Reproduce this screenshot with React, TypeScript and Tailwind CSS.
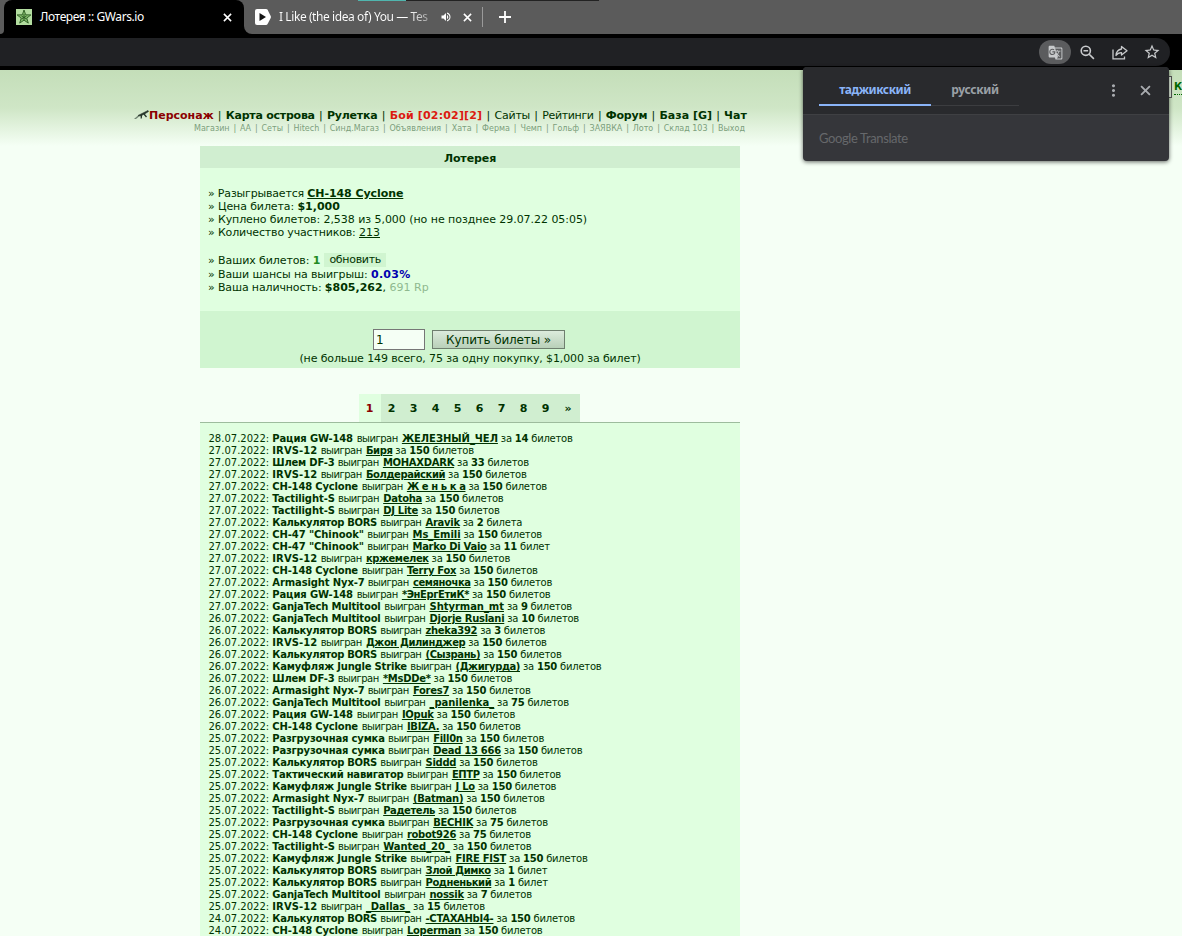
import React from "react";
import { MdGTranslate, MdMoreVert, MdVolumeUp, MdStarBorder } from "react-icons/md";

type Draw = [date: string, prize: string, winner: string, count: string, unit: string];

const draws: Draw[] = [
  ["28.07.2022", "Рация GW-148", "ЖЕЛЕЗНЫЙ_ЧЕЛ", "14", "билетов"],
  ["27.07.2022", "IRVS-12", "Биря", "150", "билетов"],
  ["27.07.2022", "Шлем DF-3", "MOHAXDARK", "33", "билетов"],
  ["27.07.2022", "IRVS-12", "Болдерайский", "150", "билетов"],
  ["27.07.2022", "CH-148 Cyclone", "Ж е н ь к а", "150", "билетов"],
  ["27.07.2022", "Tactilight-S", "Datoha", "150", "билетов"],
  ["27.07.2022", "Tactilight-S", "DJ Lite", "150", "билетов"],
  ["27.07.2022", "Калькулятор BORS", "Aravik", "2", "билета"],
  ["27.07.2022", 'CH-47 "Chinook"', "Ms_Emili", "150", "билетов"],
  ["27.07.2022", 'CH-47 "Chinook"', "Marko Di Vaio", "11", "билет"],
  ["27.07.2022", "IRVS-12", "кржемелек", "150", "билетов"],
  ["27.07.2022", "CH-148 Cyclone", "Terry Fox", "150", "билетов"],
  ["27.07.2022", "Armasight Nyx-7", "семяночка", "150", "билетов"],
  ["27.07.2022", "Рация GW-148", "*ЭнЕргЕтиК*", "150", "билетов"],
  ["27.07.2022", "GanjaTech Multitool", "Shtyrman_mt", "9", "билетов"],
  ["26.07.2022", "GanjaTech Multitool", "Djorje Ruslani", "10", "билетов"],
  ["26.07.2022", "Калькулятор BORS", "zheka392", "3", "билетов"],
  ["26.07.2022", "IRVS-12", "Джон Дилинджер", "150", "билетов"],
  ["26.07.2022", "Калькулятор BORS", "(Сызрань)", "150", "билетов"],
  ["26.07.2022", "Камуфляж Jungle Strike", "(Джигурда)", "150", "билетов"],
  ["26.07.2022", "Шлем DF-3", "*MsDDe*", "150", "билетов"],
  ["26.07.2022", "Armasight Nyx-7", "Fores7", "150", "билетов"],
  ["26.07.2022", "GanjaTech Multitool", "_panilenka_", "75", "билетов"],
  ["26.07.2022", "Рация GW-148", "IOpuk", "150", "билетов"],
  ["26.07.2022", "CH-148 Cyclone", "IBIZA.", "150", "билетов"],
  ["25.07.2022", "Разгрузочная сумка", "Fill0n", "150", "билетов"],
  ["25.07.2022", "Разгрузочная сумка", "Dead 13 666", "150", "билетов"],
  ["25.07.2022", "Калькулятор BORS", "Siddd", "150", "билетов"],
  ["25.07.2022", "Тактический навигатор", "ЕПТР", "150", "билетов"],
  ["25.07.2022", "Камуфляж Jungle Strike", "J Lo", "150", "билетов"],
  ["25.07.2022", "Armasight Nyx-7", "(Batman)", "150", "билетов"],
  ["25.07.2022", "Tactilight-S", "Радетель", "150", "билетов"],
  ["25.07.2022", "Разгрузочная сумка", "BECHIK", "75", "билетов"],
  ["25.07.2022", "CH-148 Cyclone", "robot926", "75", "билетов"],
  ["25.07.2022", "Tactilight-S", "Wanted_20_", "150", "билетов"],
  ["25.07.2022", "Камуфляж Jungle Strike", "FIRE FIST", "150", "билетов"],
  ["25.07.2022", "Калькулятор BORS", "Злой Димко", "1", "билет"],
  ["25.07.2022", "Калькулятор BORS", "Родненький", "1", "билет"],
  ["25.07.2022", "GanjaTech Multitool", "nossik", "7", "билетов"],
  ["25.07.2022", "IRVS-12", "_Dallas_", "15", "билетов"],
  ["24.07.2022", "Калькулятор BORS", "-CTAXAHbI4-", "150", "билетов"],
  ["24.07.2022", "CH-148 Cyclone", "Loperman", "150", "билетов"],
];

const prizeStyle: Record<string, string> = {
  "Рация GW-148": "w-[84.400px] tracking-[-0.130px]",
  "IRVS-12": "w-[48.400px] tracking-[0.080px]",
  "Шлем DF-3": "w-[65.400px] tracking-[-0.220px]",
  "CH-148 Cyclone": "w-[89.400px] tracking-[-0.180px]",
  "Tactilight-S": "w-[65.700px] tracking-[-0.100px]",
  "Калькулятор BORS": "w-[108px] tracking-[-0.330px]",
  'CH-47 "Chinook"': "w-[95px] tracking-[-0.100px]",
  "Armasight Nyx-7": "w-[95.400px] tracking-[-0.120px]",
  "GanjaTech Multitool": "w-[112px] tracking-[-0.180px]",
  "Камуфляж Jungle Strike": "w-[138px] tracking-[-0.200px]",
  "Разгрузочная сумка": "w-[115.700px] tracking-[-0.200px]",
  "Тактический навигатор": "w-[134.400px] tracking-[-0.220px]",
};

// cyrillic names run wider than latin ones
const nameTracking = (name: string) => {
  if (name.includes("_")) return "tracking-[-0.050px]";
  return /[а-яА-Я]/.test(name) ? "tracking-[-0.420px]" : "tracking-[-0.280px]";
};

const mainLinks = [
  { text: "Персонаж", style: "font-bold text-[#8b0000]" },
  { text: "Карта острова", style: "font-bold tracking-[-0.240px]" },
  { text: "Рулетка", style: "font-bold tracking-[-0.200px]" },
  { text: "Бой [02:02][2]", style: "font-bold text-[#dc1a10] tracking-[0.170px]" },
  { text: "Сайты", style: "tracking-[-0.200px]" },
  { text: "Рейтинги", style: "tracking-[-0.350px]" },
  { text: "Форум", style: "font-bold tracking-[-0.200px]" },
  { text: "База [G]", style: "font-bold" },
  { text: "Чат", style: "font-bold" },
];

const subLinks = ["Магазин", "АА", "Сеты", "Hitech", "Синд.Магаз", "Объявления", "Хата", "Ферма", "Чемп", "Гольф", "ЗАЯВКА", "Лото", "Склад 103", "Выход"];

const StarIcon = () => (
  <svg className="h-4 w-4 shrink-0" viewBox="0 0 16 16">
    <rect width="16" height="16" fill="#b3dda0" />
    <path d="M8 1l1.700 4.800 5.200.1-4.100 3.200 1.500 5L8 11.200l-4.300 2.900 1.500-5L1.100 5.900l5.200-.1z" fill="#7fb868" stroke="#2c5b22" strokeWidth=".9" />
    <path d="M8 5v6M5.500 7l5 3M10.500 7l-5 3" stroke="#224f1b" strokeWidth=".8" />
  </svg>
);

const PlayerIcon = () => (
  <svg className="h-4 w-4 shrink-0" viewBox="0 0 16 16">
    <path d="M2 0h9q1 0 1.600.8L15.700 7q.4 1 0 2l-3.100 6q-.6 1-1.600 1H2q-2 0-2-2V2q0-2 2-2z" fill="#fff" />
    <path d="M4.500 4v8l6.500-4z" fill="#151515" />
  </svg>
);

const RifleIcon = () => (
  <svg className="h-[12px] w-[15px] shrink-0" viewBox="0 0 15 12">
    <path d="M0 10l4-3.500 2 .3-4 3.200z" fill="#6f8271" />
    <path d="M4 6.500L14 1.500l.5 1-3.500 2.200L6.500 7z" fill="#26352a" stroke="#26352a" strokeWidth=".6" />
    <path d="M7.500 6l-.3 3.500M10 5l2.500 3" stroke="#26352a" strokeWidth="1.300" />
  </svg>
);

const CloseIcon = ({ className }: { className: string }) => (
  <svg className={className} viewBox="0 0 10 10">
    <path d="M1 1l8 8M9 1L1 9" stroke="currentColor" strokeWidth="1.700" />
  </svg>
);

const ZoomOutIcon = () => (
  <svg className="ml-[9px] h-[15px] w-[15px]" viewBox="0 0 15 15" fill="none" stroke="currentColor" strokeWidth="1.600">
    <circle cx="5.800" cy="5.800" r="4.600" />
    <path d="M9.200 9.200l4.700 4.700M3.500 5.800h4.600" />
  </svg>
);

const ShareIcon = () => (
  <svg className="ml-[17px] h-[15px] w-[16px]" viewBox="0 0 16 15" fill="none" stroke="currentColor" strokeWidth="1.300">
    <path d="M1 4.500V13.800h11.500V11.500" />
    <path d="M9.500 1.500l5.500 4.300-5.500 4.200V7.600Q6 7.500 4 10.500 4.500 4.800 9.500 4z" strokeLinejoin="round" />
  </svg>
);

const BrowserBar = () => {
  return (
    <div className="h-[70px] bg-black">
      {/* tabs */}
      <div className="relative flex h-[34px] bg-[#5b5b5b] text-white">
        <div className="absolute left-[358px] top-0 h-px w-12 bg-[#50b5ae]" />
        <div className="absolute left-[406px] top-0 h-px w-[193px] bg-[#222]" />
        <div className="w-1 bg-black">
          <div className="h-full rounded-br-[4px] bg-[#5b5b5b]" />
        </div>
        <div className="flex h-[34px] w-60 items-center rounded-t-[8px] bg-black pl-3 pr-[12px]">
          <StarIcon />
          <p className="ml-2 flex-1 whitespace-nowrap text-[12px] tracking-[-0.400px]">Лотерея :: GWars.io</p>
          <CloseIcon className="h-[9px] w-[9px]" />
        </div>
        <div className="w-2 bg-black">
          <div className="h-full rounded-bl-[8px] bg-[#5b5b5b]" />
        </div>
        <div className="flex items-center pl-[3px]">
          <PlayerIcon />
          <p className="ml-2 w-[154px] whitespace-nowrap bg-linear-to-r from-white from-85% to-[#888] bg-clip-text text-[12px] tracking-[-0.420px] text-transparent">
            I Like (the idea of) You — Tes
          </p>
          <MdVolumeUp className="ml-[7px] text-[12px]" />
          <CloseIcon className="ml-[11px] h-[9px] w-[9px]" />
          <div className="ml-[10px] h-5 w-px bg-[#9a9a9a]" />
          <svg className="ml-[16px] h-3 w-3" viewBox="0 0 12 12">
            <path d="M6 0v12M0 6h12" stroke="#fff" strokeWidth="1.800" />
          </svg>
        </div>
      </div>
      {/* address bar */}
      <div className="mt-1 flex h-7 w-[1170px] items-center justify-end rounded-r-full bg-[#202124] pr-[9px] text-[#c8cacc]">
        <div className="flex h-6 w-8 items-center justify-center rounded-full bg-[#5b5c5e]">
          <MdGTranslate className="text-[15px]" />
        </div>
        <ZoomOutIcon />
        <ShareIcon />
        <MdStarBorder className="ml-[15px] text-[18px]" />
      </div>
    </div>
  );
};

const TranslatePopup = () => {
  return (
    <div className="absolute left-[803px] top-[67px] h-[94px] w-[366px] overflow-hidden rounded-[4px] bg-[#35363a] font-['Noto_Sans','Open_Sans',sans-serif] shadow-[0_1px_4px_rgba(0,0,0,0.6)]">
      <div className="flex h-[48px] border-b border-[#3f4043] bg-[#292a2d] pl-4 text-[12px] font-bold">
        <div className="flex h-[39px] w-28 items-center justify-center border-b-2 border-[#8ab4f8] pt-[8px] tracking-[-0.480px] text-[#8ab4f8]">таджикский</div>
        <div className="flex h-[39px] w-[88px] items-center justify-center border-b border-[#3c3d40] pt-[7px] tracking-[-0.350px] text-[#9aa0a6]">русский</div>
        <MdMoreVert className="ml-[85px] mt-[14px] text-[19px] text-[#a8abaf]" />
        <CloseIcon className="ml-[17px] mt-[18px] h-[11px] w-[11px] text-[#a8abaf]" />
      </div>
      <p className="ml-4 mt-[13px] font-['Lato',sans-serif] text-[13px] leading-5 tracking-[-0.380px] text-[#66686b]">Google Translate</p>
    </div>
  );
};

const SiteMenu = () => {
  return (
    <div className="h-[76px] bg-linear-to-b from-[#c4deb9] via-[#cfe6c6] via-50% to-[#f5fff5] pt-[39px]">
      <div className="ml-[134px] flex w-[613px] whitespace-nowrap text-[11px] leading-[13px]">
        <RifleIcon />
        <div className="flex flex-1 justify-between">
          {mainLinks.map((link, i) => (
            <React.Fragment key={link.text}>
              {i > 0 && <span>|</span>}
              <a className={link.style}>{link.text}</a>
            </React.Fragment>
          ))}
        </div>
      </div>
      <div className="ml-[194px] flex w-[551px] justify-between whitespace-nowrap text-[8px] leading-[13px] text-[#7c9f7c]">
        {subLinks.map((text, i) => (
          <React.Fragment key={text}>
            {i > 0 && <span>|</span>}
            <a>{text}</a>
          </React.Fragment>
        ))}
      </div>
    </div>
  );
};

const LotteryInfo = () => {
  return (
    <div className="text-[11px] leading-[13px]">
      <div className="h-[22px] bg-[#d0eed0] text-center font-bold leading-[25px] tracking-[-0.100px]">Лотерея</div>
      <div className="h-[143px] whitespace-nowrap bg-[#e0ffe0] pl-2 pt-[19px]">
        <p><span className="tracking-[-0.180px]">» Разыгрывается </span><a className="font-bold tracking-[-0.070px] underline">CH-148 Cyclone</a></p>
        <p><span className="tracking-[-0.110px]">» Цена билета: </span><b>$1,000</b></p>
        <p className="tracking-[-0.045px]"><span className="tracking-[-0.110px]">» Куплено билетов: </span>2,538 из 5,000 (но не позднее 29.07.22 05:05)</p>
        <p><span className="tracking-[-0.160px]">» Количество участников: </span><a className="underline">213</a></p>
        <p className="mt-[14px] flex h-[15px] items-center whitespace-pre">
          <span className="tracking-[-0.090px]">» Ваших билетов: </span><b className="text-[#228b22]">1</b>
          <span className="mb-[2px] ml-[4px] h-[14px] bg-[#d0f5d0] px-[5px] tracking-[-0.300px]">обновить</span>
        </p>
        <p><span className="tracking-[-0.120px]">» Ваши шансы на выигрыш: </span><b className="text-[#0000b0] tracking-[0.300px]">0.03%</b></p>
        <p><span className="tracking-[-0.140px]">» Ваша наличность: </span><b>$805,262</b>, <span className="text-[#8fb98f]">691 Rp</span></p>
      </div>
      <div className="h-[57px] bg-[#d0f5d0] pt-[18px] text-center">
        <div className="flex h-[23px] items-start justify-center gap-[7px] pr-[2px]">
          <input className="h-[21px] w-[52px] border border-[#767676] bg-[#f5fff5] px-[2px] text-[12px]" defaultValue="1" />
          <button className="mt-px h-[19px] w-[133px] whitespace-nowrap border border-[#6f7f6f] bg-linear-to-b from-[#dcebdc] to-[#b9d0b9] text-[12px] leading-[18px] tracking-[-0.150px]">Купить билеты »</button>
        </div>
        <p className="tracking-[-0.125px]">(не больше 149 всего, 75 за одну покупку, $1,000 за билет)</p>
      </div>
    </div>
  );
};

const Pager = () => {
  return (
    <div className="mt-[26px] flex h-7 justify-center pr-[2px] text-[11px] font-bold leading-[29px]">
      <span className="w-[22px] bg-[#e0ffe0] text-center text-[#8b0000]">1</span>
      {["2", "3", "4", "5", "6", "7", "8", "9", "»"].map((page) => (
        <span key={page} className="w-[22px] bg-[#d0eed0] text-center last:w-[23px]">{page}</span>
      ))}
    </div>
  );
};

const App = () => {
  return (
    <div className="relative h-[936px] w-[1182px] overflow-hidden bg-[#f5fff5] font-['DejaVu_Sans',sans-serif] text-[#003300]">
      <div className="font-['Noto_Sans','Open_Sans',sans-serif]">
        <BrowserBar />
      </div>
      <SiteMenu />
      <div className="ml-[200px] w-[540px]">
        <LotteryInfo />
        <Pager />
        {/* past draws */}
        <div className="h-[520px] border-t border-[#9dbc9d] bg-[#e0ffe0] pl-[8.500px] pt-[10px] text-[10px] leading-3">
          {draws.map(([date, prize, winner, count, unit], i) => (
            <p key={i} className="flex whitespace-pre">
              <span className="w-[63.800px]">{date}:</span>
              <b className={prizeStyle[prize]}>{prize}</b>
              <span className="w-[45.200px] tracking-[-0.500px]">выигран</span>
              <a className={`font-bold underline ${nameTracking(winner)}`}>{winner}</a>
              <span className="tracking-[-0.230px]"> за <b>{count}</b> {unit}</span>
            </p>
          ))}
        </div>
      </div>
      {/* right edge of the page, partly behind the popup */}
      <div className="absolute left-[1160px] top-[76px] flex items-center text-[10px] font-bold">
        <div className="h-[22px] w-3 border border-[#555] bg-[#e6f5e2]" />
        <span className="ml-[2px] border-b border-dotted border-[#006600] leading-[14px] text-[#006600]">К</span>
      </div>
      <TranslatePopup />
    </div>
  );
};

export default App;
